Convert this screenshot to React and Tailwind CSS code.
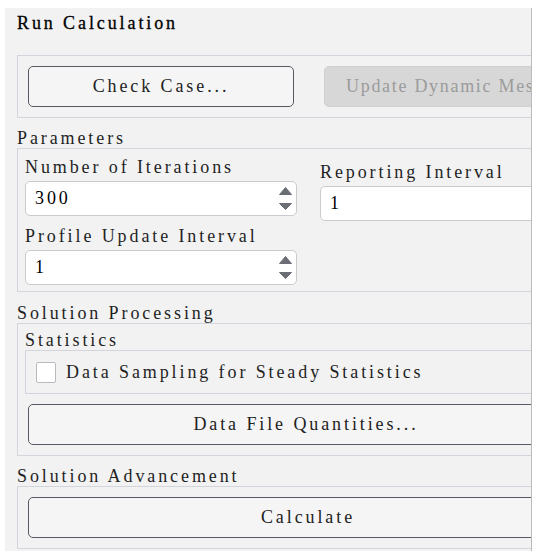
import React from 'react';

// small up/down spinner used by the numeric inputs
function Spinner() {
  return (
    <div className="flex flex-col items-center gap-[8px] pr-[4px]">
      <svg width="13" height="8" viewBox="0 0 13 8">
        <path d="M6.5 0.5 L12.5 7.5 L0.5 7.5 Z" fill="#6b6f75" stroke="#6b6f75" strokeLinejoin="round" />
      </svg>
      <svg width="13" height="7" viewBox="0 0 13 7">
        <path d="M0.5 0.5 L12.5 0.5 L6.5 6.5 Z" fill="#6b6f75" stroke="#6b6f75" strokeLinejoin="round" />
      </svg>
    </div>
  );
}

function NumberField({ label, value, spin = true, width = 'w-[272px]' }) {
  return (
    <div className="flex flex-col gap-[4px]">
      <div className="leading-5 h-[20px] whitespace-nowrap">{label}</div>
      <div className={`${width} h-[35px] bg-white border border-[#c9cbd0] rounded-[5px] flex items-center justify-between pl-[9px]`}>
        <span className="text-black">{value}</span>
        {spin && <Spinner />}
      </div>
    </div>
  );
}

function Button({ children, className = '' }) {
  return (
    <div className={`h-[41px] border-[1.5px] border-[#565b63] rounded-[5px] bg-[#f5f5f5] flex items-center justify-center whitespace-nowrap text-[#222] ${className}`}>
      {children}
    </div>
  );
}

export default function App() {
  return (
    <div className="w-[538px] h-[551px] bg-white pt-[8px] pl-[5px] font-['Liberation_Serif',serif] text-[18px] tracking-[2.9px] text-[#1f1f1f]">
      <div className="w-[527px] h-[543px] bg-[#f2f2f2] border-r border-[#b9bbbf] overflow-hidden">
        <div className="w-[640px] pl-[12px]">
          <div className="pt-[3px] h-[28px] leading-6 text-black [-webkit-text-stroke:0.3px_#000]">Run Calculation</div>

          <div className="mt-[19px] w-[600px] border border-[#d3d5dc] pt-[10px] pb-[10px] pl-[10px] flex gap-[30px]">
            <Button className="w-[266px]">Check Case...</Button>
            <div className="w-[240px] h-[41px] rounded-[5px] bg-[#d7d7d7] border border-[#cfcfcf] flex items-center pl-[21px] whitespace-nowrap tracking-[1.7px] text-[#9b9b9b]">
              Update Dynamic Mesh
            </div>
          </div>

          <div className="mt-[10px] leading-5 h-[20px]">Parameters</div>
          <div className="w-[600px] border border-[#d3d5dc] pt-[8px] pb-[6px] pl-[7px] flex gap-[23px]">
            <div className="flex flex-col gap-[10px]">
              <NumberField label="Number of Iterations" value="300" />
              <NumberField label="Profile Update Interval" value="1" />
            </div>
            <div className="pt-[5px]">
              <NumberField label="Reporting Interval" value="1" spin={false} />
            </div>
          </div>

          <div className="mt-[11px] leading-5 h-[20px]">Solution Processing</div>
          <div className="w-[600px] border border-[#d3d5dc] pt-[6px] pb-[10px] pl-[7px]">
            <div className="leading-5 h-[20px]">Statistics</div>
            <div className="w-[580px] h-[44px] border border-[#d3d5dc] flex items-center pl-[10px] gap-[10px]">
              <div className="w-[20px] h-[21px] bg-white border border-[#b9bbc0] rounded-[2px]" />
              <span className="whitespace-nowrap">Data Sampling for Steady Statistics</span>
            </div>
            <Button className="mt-[10px] ml-[3px] w-[556px]">Data File Quantities...</Button>
          </div>

          <div className="mt-[10px] leading-5 h-[20px]">Solution Advancement</div>
          <div className="w-[600px] border border-[#d3d5dc] pt-[10px] pb-[10px] pl-[10px]">
            <Button className="w-[560px]">Calculate</Button>
          </div>
        </div>
      </div>
    </div>
  );
}
